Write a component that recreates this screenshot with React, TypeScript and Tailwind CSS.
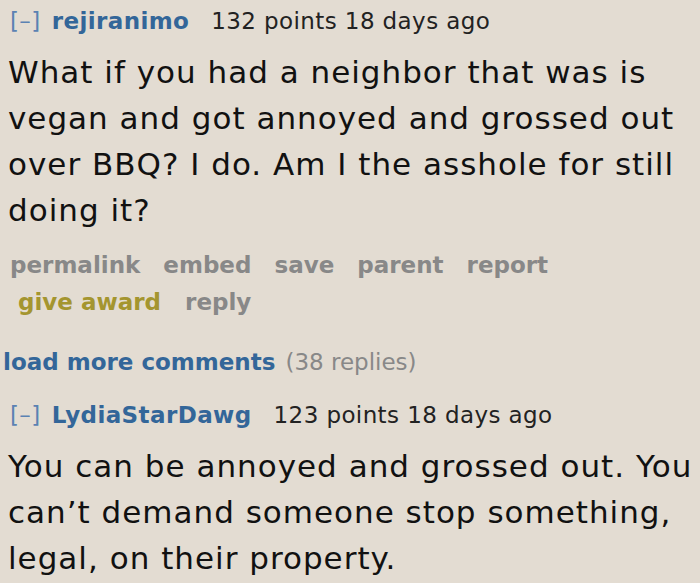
import React from 'react';

const font = { fontFamily: '"DejaVu Sans", Tahoma, Verdana, sans-serif' };

interface CommentProps {
    author: string;
    points: number;
    age: string;
}

const CommentHeader: React.FC<CommentProps> = ({ author, points, age }) => (
    <div className="flex items-baseline text-[23px] leading-[28px] tracking-[0.4px] pl-[10px]">
        <span className="text-[#5b82b3]">[–]</span>
        <span className="ml-[11px] font-bold text-[#336699]">{author}</span>
        <span className="ml-[22px] text-[#222]">{points} points {age}</span>
    </div>
);

const App: React.FC = () => {
    return (
        <div className="w-[700px] h-[583px] overflow-hidden bg-[#e3dcd2]" style={font}>
            {/* First comment */}
            <div className="pt-[7px]">
                <CommentHeader author="rejiranimo" points={132} age="18 days ago" />
                <p className="mt-[14px] pl-[8px] pr-[4px] text-[31px] leading-[46px] tracking-[1px] text-[#111]">
                    What if you had a neighbor that was is vegan and got annoyed and grossed out over BBQ? I do. Am I the asshole for still doing it?
                </p>
                <div className="mt-[14px] pl-[10px] flex gap-[23px] text-[23px] leading-[37px] font-bold text-[#888]">
                    <span>permalink</span>
                    <span>embed</span>
                    <span>save</span>
                    <span>parent</span>
                    <span>report</span>
                </div>
                <div className="pl-[18px] flex gap-[24px] text-[23px] leading-[37px] font-bold">
                    <span className="text-[#a4952f]">give award</span>
                    <span className="text-[#888]">reply</span>
                </div>
            </div>

            {/* Load more */}
            <div className="mt-[26px] pl-[3px] text-[23px] leading-[30px]">
                <span className="font-bold text-[#336699]">load more comments</span>
                <span className="ml-[10px] text-[#888]">(38 replies)</span>
            </div>

            {/* Second comment */}
            <div className="mt-[24px]">
                <CommentHeader author="LydiaStarDawg" points={123} age="18 days ago" />
                <p className="mt-[14px] pl-[8px] text-[31px] leading-[46px] tracking-[1px] text-[#111]">
                    You can be annoyed and grossed out. You can’t demand someone stop something, legal, on their property.
                </p>
            </div>
        </div>
    );
};

export default App;
